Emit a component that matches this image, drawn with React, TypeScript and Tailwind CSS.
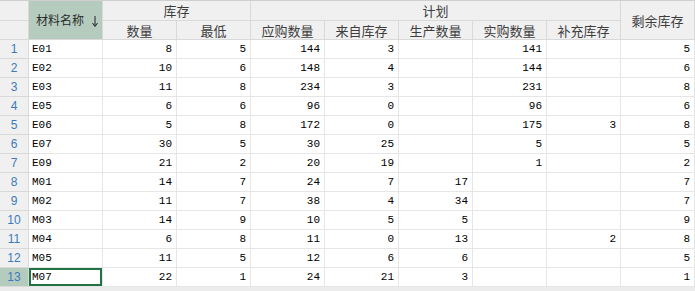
import React from "react";

type Row = [string, string, string, string, string, string, string, string, string];

const rows: Row[] = [
  ["E01", "8", "5", "144", "3", "", "141", "", "5"],
  ["E02", "10", "6", "148", "4", "", "144", "", "6"],
  ["E03", "11", "8", "234", "3", "", "231", "", "8"],
  ["E05", "6", "6", "96", "0", "", "96", "", "6"],
  ["E06", "5", "8", "172", "0", "", "175", "3", "8"],
  ["E07", "30", "5", "30", "25", "", "5", "", "5"],
  ["E09", "21", "2", "20", "19", "", "1", "", "2"],
  ["M01", "14", "7", "24", "7", "17", "", "", "7"],
  ["M02", "11", "7", "38", "4", "34", "", "", "7"],
  ["M03", "14", "9", "10", "5", "5", "", "", "9"],
  ["M04", "6", "8", "11", "0", "13", "", "2", "8"],
  ["M05", "11", "5", "12", "6", "6", "", "", "5"],
  ["M07", "22", "1", "24", "21", "3", "", "", "1"],
];

const hdr =
  "bg-[#f0f0f0] border-r border-b border-[#d9d9d9] text-[#3d3d3d] text-[13px] flex items-center justify-center leading-none";
const cjk = { fontFamily: '"Noto Sans CJK SC", "Noto Sans", sans-serif' };
const mono = { fontFamily: '"Liberation Mono", "DejaVu Sans Mono", monospace' };

export default function App() {
  return (
    <div className="w-[695px] h-[291px] bg-[#ececec] overflow-hidden">
      <div className="border-t border-[#cfcfcf] bg-white">
        <div
          className="grid grid-cols-[29px_repeat(9,74px)] grid-rows-[20px_19px_repeat(13,19px)]"
          style={cjk}
        >
          <div className={`${hdr} col-start-1 row-start-1`} />
          <div className={`${hdr} col-start-1 row-start-2`} />
          <div className="col-start-2 row-start-1 row-span-2 bg-[#b4cbbe] border-r border-b border-[#d9d9d9] text-[#2b2b2b] text-[12px] flex items-center justify-between pl-[7px] pr-[4px] leading-none">
            <span>材料名称</span>
            <svg width="6" height="11" viewBox="0 0 6 11" className="mt-[2px]">
              <path d="M3 0 V10" stroke="#222" strokeWidth="1" />
              <path d="M0.5 7 L3 10.5 L5.5 7" fill="none" stroke="#222" strokeWidth="1" />
            </svg>
          </div>
          <div className={`${hdr} col-start-3 col-span-2 row-start-1`}>库存</div>
          <div className={`${hdr} col-start-5 col-span-5 row-start-1`}>计划</div>
          <div className={`${hdr} col-start-10 row-start-1 row-span-2`}>剩余库存</div>
          <div className={`${hdr} col-start-3 row-start-2`}>数量</div>
          <div className={`${hdr} col-start-4 row-start-2`}>最低</div>
          <div className={`${hdr} col-start-5 row-start-2`}>应购数量</div>
          <div className={`${hdr} col-start-6 row-start-2`}>来自库存</div>
          <div className={`${hdr} col-start-7 row-start-2`}>生产数量</div>
          <div className={`${hdr} col-start-8 row-start-2`}>实购数量</div>
          <div className={`${hdr} col-start-9 row-start-2`}>补充库存</div>

          {rows.map((r, i) => {
            const sel = i === rows.length - 1;
            return (
              <React.Fragment key={i}>
                <div
                  className={`${
                    sel ? "bg-[#b4cbbe]" : "bg-[#f0f0f0]"
                  } border-r border-b border-[#d9d9d9] text-[#3a7bbd] text-[12px] flex items-center justify-center leading-none`}
                  style={{ fontFamily: '"Liberation Sans", Arial, sans-serif' }}
                >
                  {i + 1}
                </div>
                {r.map((v, j) => (
                  <div
                    key={j}
                    className={`border-r border-b border-[#e6e6e6] text-[11px] text-black flex items-center leading-none ${
                      j === 0 ? "justify-start pl-[3px]" : "justify-end pr-[4px]"
                    } ${sel && j === 0 ? "shadow-[inset_0_0_0_2px_#217346]" : ""}`}
                    style={mono}
                  >
                    {v}
                  </div>
                ))}
              </React.Fragment>
            );
          })}
        </div>
      </div>
    </div>
  );
}
